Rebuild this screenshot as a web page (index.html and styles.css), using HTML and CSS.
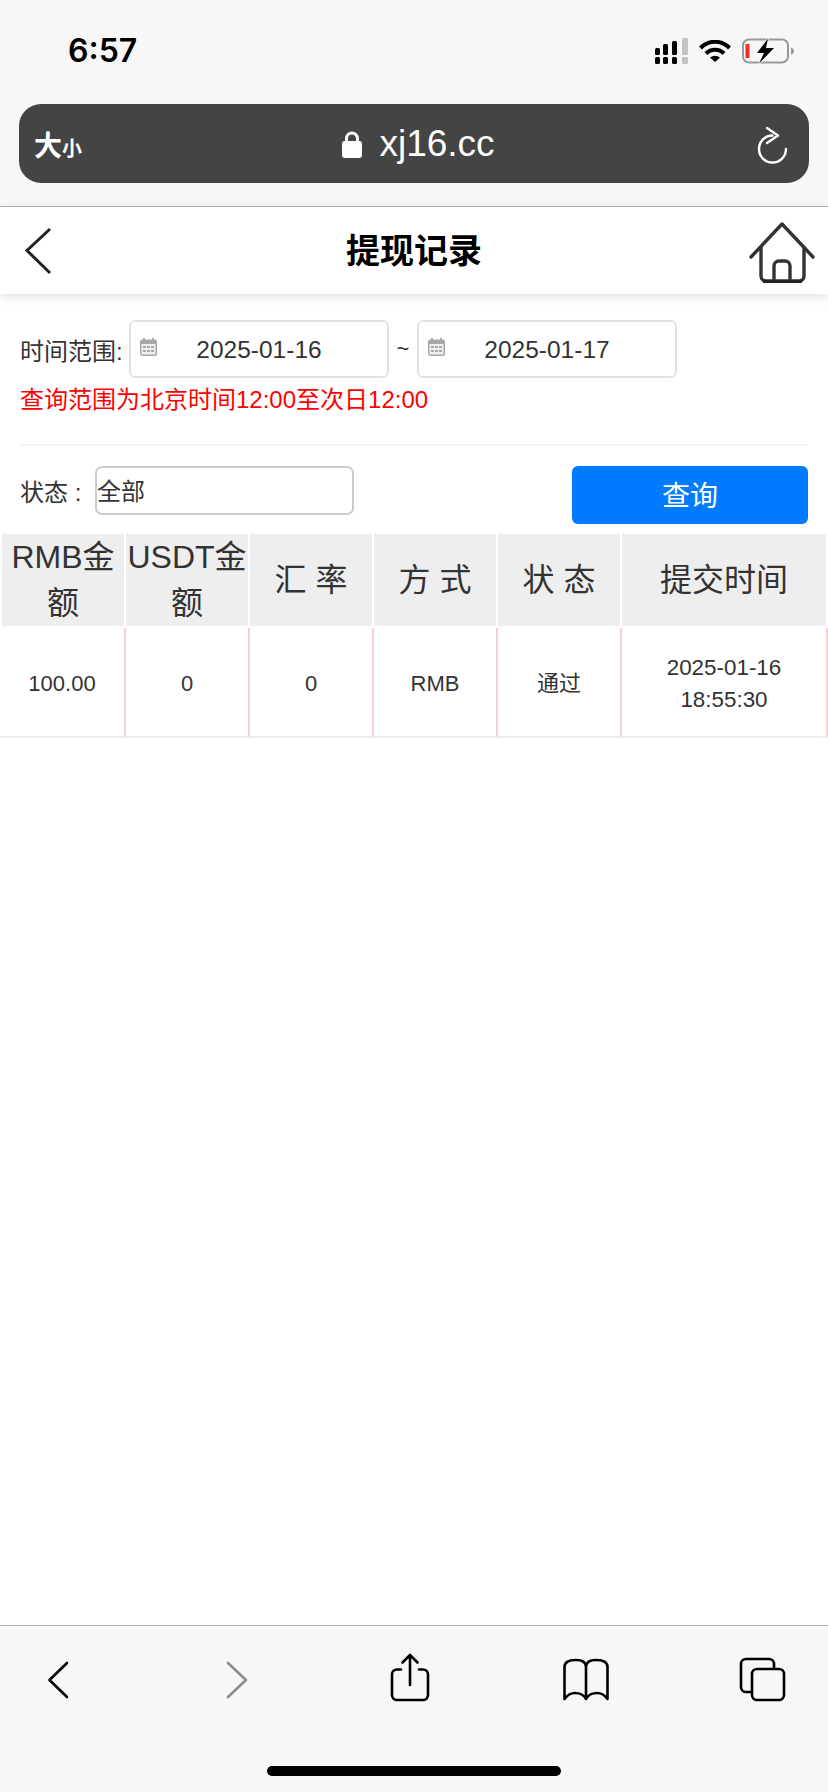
FILE: index.html
```html
<!DOCTYPE html>
<html lang="zh-CN">
<head>
    <meta charset="UTF-8">
    <title>提现记录</title>
    <link rel="stylesheet" href="styles.css">
</head>
<body>
    <div class="chrome">
        <div class="status">
            <span class="clock">6:57</span>
            <div class="status-icons">
                <svg width="33" height="26" viewBox="0 0 33 26">
                    <rect x="0" y="10" width="5" height="7" rx="1.5"/>
                    <rect x="8" y="6" width="5" height="11" rx="1.5"/>
                    <rect x="17" y="3" width="5" height="14" rx="1.5"/>
                    <rect x="27" y="0" width="6" height="17" rx="1" fill="#c4c4c4"/>
                    <rect x="0" y="19" width="5" height="7" rx="1.5"/>
                    <rect x="8" y="19" width="5" height="7" rx="1.5"/>
                    <rect x="17" y="19" width="5" height="7" rx="1.5"/>
                    <rect x="27" y="19" width="6" height="7" rx="1" fill="#c4c4c4"/>
                </svg>
                <svg width="32" height="22" viewBox="0 0 32 22">
                    <path d="M1.5 8A20 20 0 0 1 30.5 8" fill="none" stroke="#000" stroke-width="4"/>
                    <path d="M7 13.5A12.5 12.5 0 0 1 25 13.5" fill="none" stroke="#000" stroke-width="4"/>
                    <path d="M11 17.5Q16 14 21 17.5L16 22Z"/>
                </svg>
                <svg width="52" height="26" viewBox="0 0 52 26">
                    <rect x="1" y="1.5" width="45" height="23" rx="6" fill="none" stroke="#999" stroke-width="2"/>
                    <rect x="3.5" y="6" width="4" height="14" fill="#f0302c"/>
                    <path d="M26 0.5L15 15H22L17 25.5L32 10H24Z" stroke="#f7f7f7" stroke-width="1.5" paint-order="stroke"/>
                    <path d="M49 9.5C51 10 52 11.5 52 13S51 16 49 16.5Z" fill="#999"/>
                </svg>
            </div>
        </div>
        <div class="address">
            <span class="text-size">大<small>小</small></span>
            <div class="host">
                <svg width="20" height="28" viewBox="0 0 20 28">
                    <path d="M4.5 13V8.5a5.5 5.5 0 0 1 11 0V13" fill="none" stroke="#fff" stroke-width="3"/>
                    <rect x="0" y="11" width="20" height="17" rx="3" fill="#fff"/>
                </svg>
                <span>xj16.cc</span>
            </div>
            <svg class="reload" width="33" height="38" viewBox="0 0 33 38">
                <path d="M15.5 8.5A13.5 13.5 0 1 0 29 22" fill="none" stroke="#fff" stroke-width="2.4" stroke-linecap="round"/>
                <path d="M10 1L21 8.5L10 16" fill="none" stroke="#fff" stroke-width="2.4" stroke-linecap="round" stroke-linejoin="round"/>
            </svg>
        </div>
    </div>

    <div class="nav">
        <svg class="nav-back" width="30" height="48" viewBox="0 0 30 48">
            <path d="M27 2L4 23.5L27 46" fill="none" stroke="#222" stroke-width="3"/>
        </svg>
        <h1>提现记录</h1>
        <svg class="nav-home" width="66" height="62" viewBox="0 0 66 62">
            <path d="M2 36L33 3L64 36" fill="none" stroke="#333" stroke-width="3.4" stroke-linecap="round" stroke-linejoin="round"/>
            <path d="M12 25V55a5 5 0 0 0 5 5H50a5 5 0 0 0 5-5V25" fill="none" stroke="#333" stroke-width="3.4"/>
            <path d="M25 60V45a5 5 0 0 1 5-5h6a5 5 0 0 1 5 5V60" fill="none" stroke="#333" stroke-width="3.4"/>
            <path d="M14 60.5H53" stroke="#222" stroke-width="3"/>
        </svg>
    </div>

    <div class="search">
        <div class="range">
            <span class="range-label">时间范围:</span>
            <div class="date">
                <svg class="cal" width="17" height="18" viewBox="0 0 17 18">
                    <rect x="0" y="1.5" width="17" height="16.5" rx="2" fill="#a8a8a8"/>
                    <rect x="3" y="0" width="2" height="3" fill="#a8a8a8"/>
                    <rect x="12" y="0" width="2" height="3" fill="#a8a8a8"/>
                    <rect x="1.5" y="6" width="14" height="10.5" fill="#efefef"/>
                    <path d="M3 8h3v2H3zM7 8h3v2H7zM11 8h3v2h-3zM3 12h3v2H3zM7 12h3v2H7zM11 12h3v2h-3z" fill="#a8a8a8"/>
                </svg>
                2025-01-16
            </div>
            <span class="tilde">~</span>
            <div class="date">
                <svg class="cal" width="17" height="18" viewBox="0 0 17 18">
                    <rect x="0" y="1.5" width="17" height="16.5" rx="2" fill="#a8a8a8"/>
                    <rect x="3" y="0" width="2" height="3" fill="#a8a8a8"/>
                    <rect x="12" y="0" width="2" height="3" fill="#a8a8a8"/>
                    <rect x="1.5" y="6" width="14" height="10.5" fill="#efefef"/>
                    <path d="M3 8h3v2H3zM7 8h3v2H7zM11 8h3v2h-3zM3 12h3v2H3zM7 12h3v2H7zM11 12h3v2h-3z" fill="#a8a8a8"/>
                </svg>
                2025-01-17
            </div>
        </div>
        <p class="tip">查询范围为北京时间12:00至次日12:00</p>
        <div class="filter">
            <span class="filter-label">状态 :</span>
            <div class="select">全部</div>
            <div class="btn">查询</div>
        </div>
    </div>

    <table class="list">
        <colgroup>
            <col class="c-first"><col class="c-mid"><col class="c-mid"><col class="c-mid"><col class="c-mid"><col>
        </colgroup>
        <thead>
            <tr>
                <th>RMB金额</th>
                <th>USDT金额</th>
                <th>汇 率</th>
                <th>方 式</th>
                <th>状 态</th>
                <th>提交时间</th>
            </tr>
        </thead>
        <tbody>
            <tr>
                <td>100.00</td>
                <td>0</td>
                <td>0</td>
                <td>RMB</td>
                <td>通过</td>
                <td class="td-time">2025-01-16<br>18:55:30</td>
            </tr>
        </tbody>
    </table>

    <div class="toolbar">
        <div class="tools">
            <svg width="60" height="60" viewBox="0 0 60 60">
                <path d="M39 13L21.5 30L39 47" class="tool" stroke="#000"/>
            </svg>
            <svg width="60" height="60" viewBox="0 0 60 60">
                <path d="M24 13L42 30L24 47" class="tool" stroke="#8e8e8e"/>
            </svg>
            <svg width="60" height="60" viewBox="0 0 60 60">
                <path d="M21 19.5H17a5 5 0 0 0-5 5V45a5 5 0 0 0 5 5H43a5 5 0 0 0 5-5V24.5a5 5 0 0 0-5-5H39" class="tool" stroke="#000"/>
                <path d="M30 35V5M22.5 12.5L30 5L37.5 12.5" class="tool" stroke="#000"/>
            </svg>
            <svg width="60" height="60" viewBox="0 0 60 60">
                <path d="M30 17C30 12 26 10 20 10C13 10 8.5 12 8.5 17V49C12 44 16 43 19 43C23 43 28 45 30 49C32 45 37 43 41 43C44 43 48 44 51.5 49V17C51.5 12 47 10 40 10C34 10 30 12 30 17V49" class="tool" stroke="#000"/>
            </svg>
            <svg width="60" height="60" viewBox="0 0 60 60">
                <rect x="9" y="9" width="33" height="33" rx="5" class="tool" stroke="#000"/>
                <rect x="20" y="19" width="32" height="31" rx="5" class="tool tool-top" stroke="#000"/>
            </svg>
        </div>
        <div class="home-bar"></div>
    </div>
</body>
</html>
```

FILE: styles.css
```css
* { margin: 0; padding: 0; box-sizing: border-box; }
html, body { height: 100%; }
body { display: flex; flex-direction: column; height: 1792px; background: #fff; color: #333; font-family: "Liberation Sans", "Noto Sans CJK SC", sans-serif; font-size: 24px; overflow: hidden; }

/* top browser bar */
.chrome { height: 207px; background: #f7f7f7; border-bottom: 1px solid #b2b2b2; }
.status { display: flex; justify-content: space-between; align-items: center; height: 104px; padding: 0 34px 3px 68px; }
.clock { font-family: Inter, "Liberation Sans", sans-serif; font-weight: 600; font-size: 32px; color: #000; }
.status-icons { display: flex; align-items: center; gap: 11px; }
.address { display: grid; grid-template-columns: 1fr auto 1fr; align-items: center; height: 79px; margin: 0 19px; padding: 0 19px 0 15px; background: #444; border-radius: 22px; color: #fff; }
.text-size { font-size: 28px; font-weight: bold; }
.text-size small { font-size: 20px; }
.host { display: flex; align-items: center; gap: 17px; margin-left: 13px; font-size: 37px; }
.reload { justify-self: end; margin-top: 4px; }

/* page title bar */
.nav { position: relative; z-index: 1; display: grid; grid-template-columns: 120px 1fr 120px; align-items: center; height: 87px; background: #fff; box-shadow: 0 3px 10px rgba(0, 0, 0, .12); }
.nav-back { margin-left: 23px; }
.nav h1 { padding-bottom: 4px; font-size: 34px; font-weight: bold; color: #000; text-align: center; }
.nav-home { justify-self: end; margin: 3px 13px 0 0; }

/* search form */
.search { padding: 26px 20px 0; }
.range { display: flex; align-items: center; }
.range-label { width: 109px; }
.date { position: relative; width: 260px; height: 58px; border: 2px solid #e3e3e3; border-radius: 6px; font-size: 24.5px; text-align: center; line-height: 56px; }
.cal { position: absolute; left: 9px; top: 16px; }
.tilde { width: 28px; text-align: center; font-size: 22px; }
.tip { margin-top: 6px; line-height: 32px; color: #f00; }
.filter { display: flex; align-items: flex-start; margin-top: 28px; padding-top: 20px; border-top: 2px solid #f5f5f5; }
.filter-label { width: 75px; line-height: 54px; }
.select { width: 259px; height: 49px; border: 2px solid #ccc; border-radius: 7px; line-height: 47px; }
.btn { width: 236px; height: 58px; margin-left: auto; background: #007aff; border-radius: 6px; color: #fff; font-size: 28px; line-height: 62px; text-align: center; }

/* record table */
.list { width: 828px; margin-top: 10px; border-collapse: separate; border-spacing: 0; table-layout: fixed; text-align: center; }
.c-first { width: 126px; }
.c-mid { width: 124px; }
.list th { height: 94px; background: #eee; border-right: 2px solid #fff; border-bottom: 2px solid #fff; font-size: 32px; font-weight: normal; line-height: 46px; }
.list th:first-child { border-left: 2px solid #fff; }
.list td { height: 110px; padding-top: 3px; border-right: 2px solid #f6d0d0; border-bottom: 2px solid #eee; font-size: 22px; line-height: 32px; }
.list .td-time { font-size: 22.4px; }

/* bottom browser bar */
.toolbar { margin-top: auto; height: 167px; padding-top: 24px; background: #f7f7f7; border-top: 1px solid #b2b2b2; }
.tools { display: flex; justify-content: space-between; height: 60px; padding: 0 36px 0 28px; }
.tool { fill: none; stroke-width: 2.6; stroke-linecap: round; stroke-linejoin: round; }
.tool-top { fill: #f7f7f7; }
.home-bar { width: 294px; height: 10px; margin: 56px auto 0; background: #000; border-radius: 5px; }
```
